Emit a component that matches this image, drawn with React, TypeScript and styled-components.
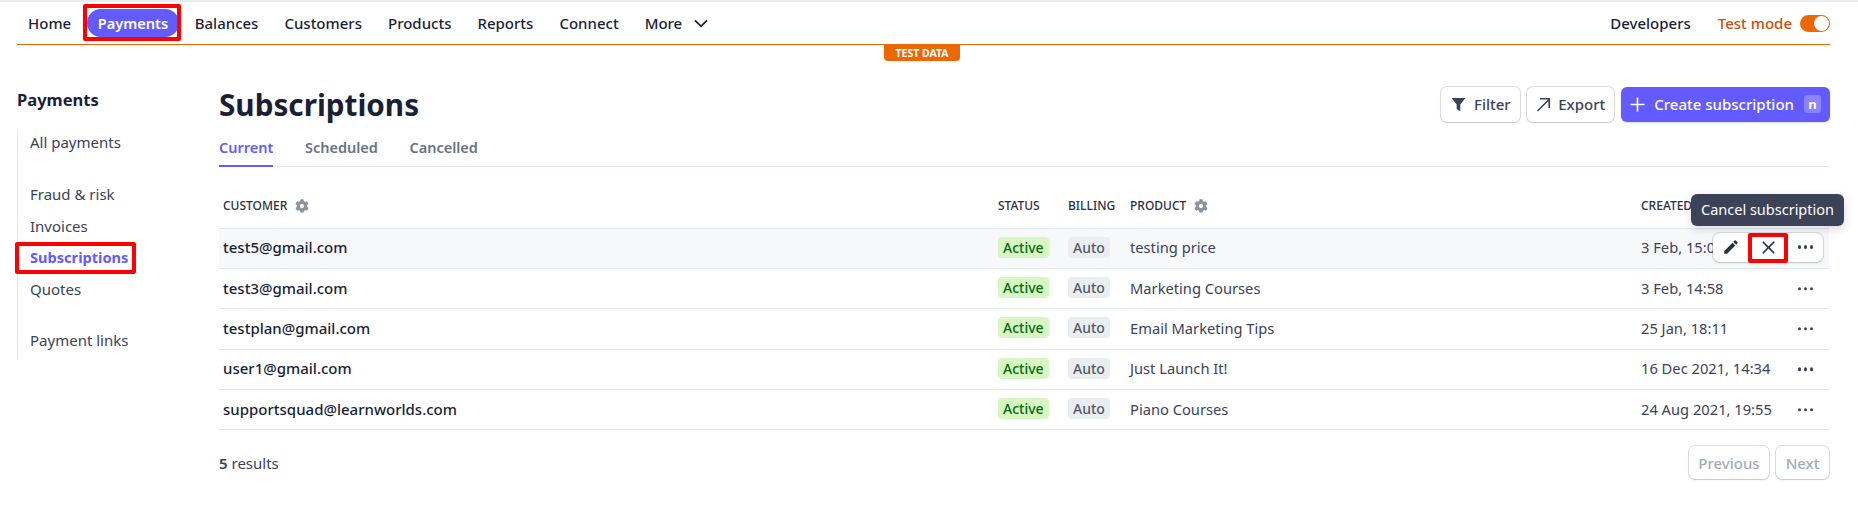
import React from "react";
import styled, { createGlobalStyle } from "styled-components";
import { X } from "lucide-react";
import { FaCog } from "react-icons/fa";
import { MdEdit } from "react-icons/md";

const Global = createGlobalStyle`
  html, body { margin: 0; padding: 0; background: #fff; }
  body { font-family: "Noto Sans", "Open Sans", sans-serif; color: #1a1f36; overflow: hidden; }
  * { box-sizing: border-box; }
`;

const Page = styled.div`
  width: 1858px;
  height: 507px;
  border-top: 2px solid #e9edf2;
`;
const Nav = styled.nav`
  margin: 0 28px 0 17px;
  height: 43px;
  display: flex;
  align-items: center;
  gap: 4px;
  border-bottom: 1px solid #ed6704;
  font-size: 15px;
  font-weight: 500;
`;
const NavItem = styled.span<{ $active?: boolean }>`
  position: relative;
  padding: 0 ${(p) => (p.$active ? 10.5 : 11)}px;
  margin: 0 ${(p) => (p.$active ? 1 : 0)}px;
  height: 28px;
  line-height: 28px;
  border-radius: 14px;
  color: ${(p) => (p.$active ? "#fff" : "#1a1f36")};
  background: ${(p) => (p.$active ? "#635bff" : "transparent")};
  font-weight: ${(p) => (p.$active ? 600 : 500)};
  font-size: ${(p) => (p.$active ? 14.6 : 15)}px;
  display: flex;
  align-items: center;
  gap: 12px;
`;
const Annotation = styled.i<{ $inset: string }>`
  position: absolute;
  inset: ${(p) => p.$inset};
  border: 4px solid #f00;
  border-radius: 2px;
  pointer-events: none;
`;
const NavSpacer = styled.div`
  flex: 1;
`;
const TestMode = styled.span`
  display: flex;
  align-items: center;
  gap: 8px;
  margin-left: 12px;
  color: #c8500a;
`;
const Toggle = styled.span`
  width: 30px;
  height: 17px;
  border-radius: 9px;
  background: #ed6704;
  display: flex;
  justify-content: flex-end;
  padding: 1px;
`;
const Knob = styled.span`
  width: 15px;
  height: 15px;
  border-radius: 50%;
  background: #fff;
`;
const BadgeRow = styled.div`
  display: flex;
  justify-content: center;
  margin-right: 14px;
`;
const TestBadge = styled.span`
  width: 76px;
  height: 16px;
  background: #ed6704;
  color: #fff;
  border-radius: 0 0 4px 4px;
  font-size: 10.5px;
  font-weight: 700;
  line-height: 16px;
  text-align: center;
`;
const Body = styled.div`
  display: flex;
  padding: 0 29px 0 17px;
`;
const Sidebar = styled.aside`
  width: 202px;
  flex: none;
`;
const SideTitle = styled.div`
  font-size: 16.5px;
  font-weight: 700;
  line-height: 24px;
  margin-top: 27px;
`;
const SideList = styled.div`
  margin-top: 18px;
  border-left: 1px solid #e3e8ee;
  height: 230px;
  padding: 0 0 0 12px;
  display: flex;
  flex-direction: column;
  & > :first-child {
    margin-top: -3.5px;
  }
`;
const SideItem = styled.div<{ $active?: boolean; $gap?: number }>`
  position: relative;
  height: 31.5px;
  line-height: 31.5px;
  margin-top: ${(p) => p.$gap ?? 0}px;
  font-size: ${(p) => (p.$active ? 14.6 : 15)}px;
  font-weight: ${(p) => (p.$active ? 700 : 400)};
  color: ${(p) => (p.$active ? "#635bff" : "#3c4257")};
  width: fit-content;
`;
const Main = styled.main`
  flex: 1;
  min-width: 0;
`;
const Header = styled.div`
  display: flex;
  align-items: center;
  justify-content: space-between;
  height: 36px;
  margin-top: 25px;
`;
const Title = styled.h1`
  margin: 2px 0 0;
  font-size: 29.7px;
  font-weight: 700;
  line-height: 36px;
`;
const Actions = styled.div`
  display: flex;
  gap: 7px;
  margin-right: -1px;
`;
const Button = styled.button<{ $primary?: boolean; $disabled?: boolean }>`
  height: ${(p) => (p.$disabled ? 33 : 35)}px;
  padding: 0 ${(p) => (p.$disabled ? 9.5 : 9)}px;
  display: flex;
  align-items: center;
  gap: ${(p) => (p.$primary ? 9 : 7.5)}px;
  border: 0;
  border-radius: 6px;
  font: 500 15px "Noto Sans", sans-serif;
  color: ${(p) => (p.$primary ? "#fff" : p.$disabled ? "#a3acba" : "#3c4257")};
  background: ${(p) => (p.$primary ? "#635bff" : "#fff")};
  box-shadow: ${(p) =>
    p.$primary
      ? "0 1px 2px rgba(60,66,87,.2)"
      : "0 0 0 1px rgba(60,66,87,.16), 0 1px 2px rgba(60,66,87,.16)"};
`;
const Key = styled.span`
  width: 17px;
  height: 18px;
  margin-left: 1px;
  border-radius: 3px;
  background: rgba(255, 255, 255, 0.25);
  font-size: 13px;
  font-weight: 700;
  line-height: 18px;
  text-align: center;
`;
const Tabs = styled.div`
  margin-top: 10px;
  height: 35px;
  display: flex;
  gap: 31.5px;
  border-bottom: 1px solid #e3e8ee;
`;
const Tab = styled.div<{ $active?: boolean }>`
  height: 35px;
  line-height: 30px;
  font-size: 14.5px;
  font-weight: 600;
  color: ${(p) => (p.$active ? "#635bff" : "#697386")};
  border-bottom: 2px solid ${(p) => (p.$active ? "#635bff" : "transparent")};
`;
const columns = "775px 70px 62px 511px 1fr";
const HeadRow = styled.div`
  display: grid;
  grid-template-columns: ${columns};
  height: 61.5px;
  padding: 16.5px 0 0 4px;
  align-items: center;
  border-bottom: 1px solid #e3e8ee;
  font-size: 12px;
  font-weight: 500;
`;
const HeadCell = styled.div`
  display: flex;
  align-items: center;
  gap: 8px;
  color: #2a2f45;
  white-space: nowrap;
`;
const Gear = styled(FaCog)`
  color: #8792a2;
  font-size: 14px;
`;
const Row = styled.div<{ $hover?: boolean }>`
  position: relative;
  display: grid;
  grid-template-columns: ${columns};
  height: 40.4px;
  padding: 0 0 2px 4px;
  align-items: center;
  border-bottom: 1px solid #e3e8ee;
  background: ${(p) => (p.$hover ? "#f6f8fa" : "#fff")};
  font-size: 15px;
`;
const Email = styled.div`
  font-weight: 500;
  color: #1a1f36;
`;
const Pill = styled.span<{ $tone: "green" | "gray" }>`
  display: inline-block;
  height: 21px;
  line-height: 21px;
  padding: 0 5px;
  border-radius: 4px;
  font-size: 14px;
  font-weight: 500;
  background: ${(p) => (p.$tone === "green" ? "#d7f7c2" : "#ebeef1")};
  color: ${(p) => (p.$tone === "green" ? "#05690d" : "#545969")};
`;
const Cell = styled.div`
  color: #3c4257;
  font-size: 14.7px;
  white-space: nowrap;
`;
const Dots = styled.span`
  position: absolute;
  right: 16px;
  top: 50%;
  transform: translateY(-50%);
  display: flex;
  gap: 2.5px;
`;
const Dot = styled.i`
  width: 3.5px;
  height: 3.5px;
  border-radius: 50%;
  background: #3c4257;
`;
const ActionGroup = styled.div`
  position: absolute;
  right: 6px;
  top: 4px;
  width: 110px;
  height: 29px;
  display: grid;
  grid-template-columns: 35px 40px 35px;
  place-items: center;
  background: #fff;
  border-radius: 7px;
  box-shadow: 0 0 0 1px rgba(60, 66, 87, 0.14), 0 1px 2px rgba(60, 66, 87, 0.18);
  color: #3c4257;
`;
const ActionCell = styled.span`
  position: relative;
  display: flex;
  align-items: center;
  justify-content: center;
  width: 100%;
  height: 100%;
  color: #2a2f45;
`;
const InlineDots = styled.span`
  display: flex;
  gap: 2.5px;
`;
const Tooltip = styled.div`
  position: absolute;
  right: -21px;
  top: -39px;
  width: 153px;
  height: 32px;
  line-height: 30px;
  text-align: center;
  border-radius: 6px;
  background: #3c4257;
  color: #fff;
  font-size: 14.5px;
  z-index: 2;
  box-shadow: 0 3px 10px rgba(60, 66, 87, 0.2);
`;
const Footer = styled.div`
  display: flex;
  align-items: center;
  justify-content: space-between;
  margin-top: 16px;
  font-size: 15px;
  color: #3c4257;
`;
const Count = styled.b`
  font-weight: 600;
`;
const Pager = styled.div`
  display: flex;
  gap: 7px;
`;

const FilterIcon = () => (
  <svg width="15" height="15" viewBox="0 0 14 14" fill="#3c4257" style={{ marginLeft: 1 }}>
    <path d="M0.5 1h13l-4.8 6v6.2l-3.4-2V7z" />
  </svg>
);
const ExportIcon = () => (
  <svg width="15" height="15" viewBox="0 0 15 15" fill="none" stroke="#3c4257" strokeWidth="1.6">
    <path d="M1.5 14 13 2.5M4 1.8h9.2V11" />
  </svg>
);
const PlusIcon = () => (
  <svg width="15" height="15" viewBox="0 0 15 15" fill="none" stroke="#fff" strokeWidth="1.7">
    <path d="M7.5 0.5v14M0.5 7.5h14" />
  </svg>
);
const Chevron = () => (
  <svg width="14" height="9" viewBox="0 0 14 9" fill="none" stroke="#1a1f36" strokeWidth="1.8">
    <path d="M1 1.3l6 6 6-6" />
  </svg>
);
const More = () => (
  <InlineDots>
    <Dot />
    <Dot />
    <Dot />
  </InlineDots>
);

const rows = [
  ["test5@gmail.com", "testing price", "3 Feb, 15:02"],
  ["test3@gmail.com", "Marketing Courses", "3 Feb, 14:58"],
  ["testplan@gmail.com", "Email Marketing Tips", "25 Jan, 18:11"],
  ["user1@gmail.com", "Just Launch It!", "16 Dec 2021, 14:34"],
  ["supportsquad@learnworlds.com", "Piano Courses", "24 Aug 2021, 19:55"],
];

export default function App() {
  return (
    <Page>
      <Global />
      <Nav>
        <NavItem>Home</NavItem>
        <NavItem $active>
          Payments
          <Annotation $inset="-5px -2px -4px -4px" />
        </NavItem>
        <NavItem>Balances</NavItem>
        <NavItem>Customers</NavItem>
        <NavItem>Products</NavItem>
        <NavItem>Reports</NavItem>
        <NavItem>Connect</NavItem>
        <NavItem>
          More <Chevron />
        </NavItem>
        <NavSpacer />
        <NavItem>Developers</NavItem>
        <TestMode>
          Test mode
          <Toggle>
            <Knob />
          </Toggle>
        </TestMode>
      </Nav>
      <BadgeRow>
        <TestBadge>TEST DATA</TestBadge>
      </BadgeRow>
      <Body>
        <Sidebar>
          <SideTitle>Payments</SideTitle>
          <SideList>
            <SideItem>All payments</SideItem>
            <SideItem $gap={21}>Fraud &amp; risk</SideItem>
            <SideItem>Invoices</SideItem>
            <SideItem $active>
              Subscriptions
              <Annotation $inset="0 -8px 0 -15px" />
            </SideItem>
            <SideItem>Quotes</SideItem>
            <SideItem $gap={20}>Payment links</SideItem>
          </SideList>
        </Sidebar>
        <Main>
          <Header>
            <Title>Subscriptions</Title>
            <Actions>
              <Button>
                <FilterIcon />
                Filter
              </Button>
              <Button>
                <ExportIcon />
                Export
              </Button>
              <Button $primary>
                <PlusIcon />
                Create subscription
                <Key>n</Key>
              </Button>
            </Actions>
          </Header>
          <Tabs>
            <Tab $active>Current</Tab>
            <Tab>Scheduled</Tab>
            <Tab>Cancelled</Tab>
          </Tabs>
          <HeadRow>
            <HeadCell>
              CUSTOMER <Gear />
            </HeadCell>
            <HeadCell>STATUS</HeadCell>
            <HeadCell>BILLING</HeadCell>
            <HeadCell>
              PRODUCT <Gear />
            </HeadCell>
            <HeadCell>CREATED</HeadCell>
          </HeadRow>
          {rows.map(([email, product, created], i) => (
            <Row key={email} $hover={i === 0}>
              <Email>{email}</Email>
              <div>
                <Pill $tone="green">Active</Pill>
              </div>
              <div>
                <Pill $tone="gray">Auto</Pill>
              </div>
              <Cell>{product}</Cell>
              <Cell>{created}</Cell>
              {i === 0 ? (
                <ActionGroup>
                  <Tooltip>Cancel subscription</Tooltip>
                  <ActionCell>
                    <MdEdit size={18} />
                  </ActionCell>
                  <ActionCell>
                    <X size={21} strokeWidth={2} />
                    <Annotation $inset="0 0 -1px 0" />
                  </ActionCell>
                  <ActionCell>
                    <More />
                  </ActionCell>
                </ActionGroup>
              ) : (
                <Dots>
                  <Dot />
                  <Dot />
                  <Dot />
                </Dots>
              )}
            </Row>
          ))}
          <Footer>
            <span>
              <Count>5</Count> results
            </span>
            <Pager>
              <Button $disabled>Previous</Button>
              <Button $disabled>Next</Button>
            </Pager>
          </Footer>
        </Main>
      </Body>
    </Page>
  );
}
